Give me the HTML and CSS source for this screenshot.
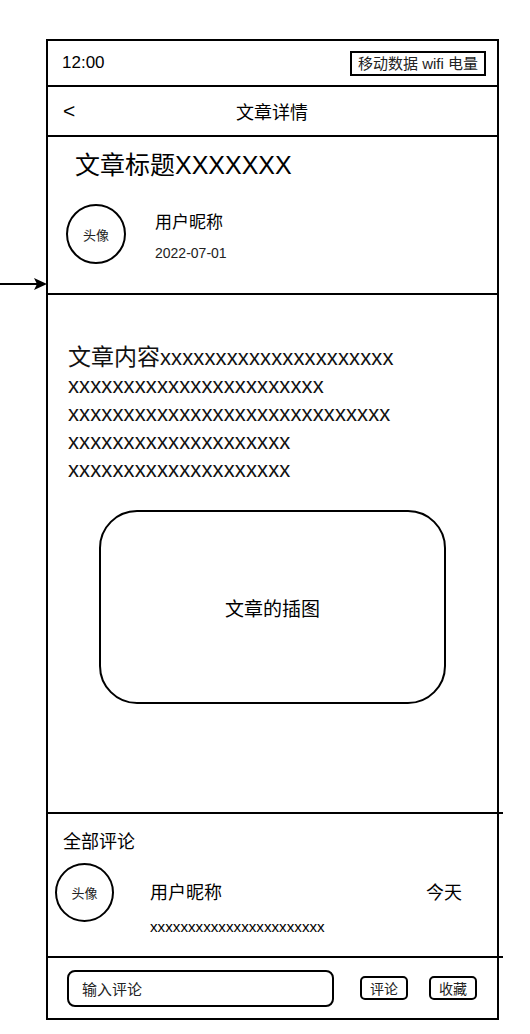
FILE: index.html
```html
<!DOCTYPE html>
<html lang="zh">
<head>
<meta charset="utf-8">
<title>文章详情</title>
<link rel="stylesheet" href="styles.css">
</head>
<body>
<div class="canvas">
  <svg class="arrow" width="48" height="16" viewBox="0 0 48 16" aria-hidden="true">
    <line x1="0" y1="8" x2="38" y2="8" stroke="#000" stroke-width="2"/>
    <polygon points="47,8 34,2 37,8 34,14" fill="#000"/>
  </svg>
  <div class="phone">
    <div class="status">
      <span class="time">12:00</span>
      <span class="badge">移动数据 wifi 电量</span>
    </div>
    <div class="nav">
      <span class="back">&lt;</span>
      <span class="nav-title">文章详情</span>
    </div>
    <div class="head">
      <div class="title">文章标题XXXXXXX</div>
      <div class="author">
        <div class="avatar">头像</div>
        <div class="author-info">
          <div class="name">用户昵称</div>
          <div class="date">2022-07-01</div>
        </div>
      </div>
    </div>
    <div class="content">
      <p class="text"><span class="lead">文章内容</span>xxxxxxxxxxxxxxxxxxxxx<br>xxxxxxxxxxxxxxxxxxxxxxx<br>xxxxxxxxxxxxxxxxxxxxxxxxxxxxx<br>xxxxxxxxxxxxxxxxxxxx<br>xxxxxxxxxxxxxxxxxxxx</p>
      <div class="picture">文章的插图</div>
    </div>
    <div class="rule"></div>
    <div class="comments">
      <div class="comments-title">全部评论</div>
      <div class="comment">
        <div class="avatar small">头像</div>
        <div class="comment-body">
          <div class="comment-top">
            <span class="c-name">用户昵称</span>
            <span class="c-time">今天</span>
          </div>
          <div class="c-text">xxxxxxxxxxxxxxxxxxxxxxx</div>
        </div>
      </div>
    </div>
    <div class="rule"></div>
    <div class="bottom">
      <div class="input">输入评论</div>
      <div class="btn">评论</div>
      <div class="btn">收藏</div>
    </div>
  </div>
</div>
</body>
</html>
```

FILE: styles.css
```css
* { box-sizing: border-box; }
html, body { margin: 0; padding: 0; background: #fff; }
body {
  font-family: "Liberation Sans", "Noto Sans CJK SC", sans-serif;
  color: #000;
}
.canvas {
  position: relative;
  padding: 39px 0 0 46px;
}
.arrow {
  position: absolute;
  left: 0;
  top: 276px;
}
.phone {
  width: 453px;
  height: 981px;
  border: 2px solid #000;
  display: flex;
  flex-direction: column;
}
.status {
  height: 46px;
  border-bottom: 2px solid #000;
  display: flex;
  align-items: center;
  justify-content: space-between;
  padding: 0 11px 0 14px;
}
.time { font-size: 17px; }
.badge {
  font-size: 15px;
  line-height: 19px;
  border: 2px solid #000;
  padding: 1px 6px;
  color: #222;
}
.nav {
  height: 50px;
  border-bottom: 2px solid #000;
  display: grid;
  grid-template-columns: 1fr auto 1fr;
  align-items: center;
  padding: 0 16px 0 15px;
}
.back { font-size: 21px; line-height: 24px; }
.nav-title { font-size: 18px; }
.head {
  height: 158px;
  border-bottom: 2px solid #000;
  padding: 12px 0 0 18px;
}
.title {
  font-size: 25px;
  line-height: 32px;
  padding-left: 9px;
}
.author {
  display: flex;
  margin-top: 23px;
}
.avatar {
  width: 60px;
  height: 60px;
  border: 2px solid #000;
  border-radius: 50%;
  display: flex;
  align-items: center;
  justify-content: center;
  font-size: 13px;
  color: #222;
  flex: none;
}
.author-info { margin-left: 29px; padding-top: 8px; }
.name { font-size: 17px; line-height: 22px; }
.date { font-size: 14px; line-height: 20px; margin-top: 9px; color: #222; }
.content {
  height: 517px;
  padding: 48px 0 0 20px;
}
.text {
  margin: 0;
  font-size: 22px;
  line-height: 28px;
  letter-spacing: 0.12px;
  color: #111;
}
.lead { font-size: 23px; letter-spacing: 0; }
.picture {
  width: 347px;
  height: 194px;
  margin: 26px 0 0 31px;
  border: 2px solid #000;
  border-radius: 38px;
  display: flex;
  align-items: center;
  justify-content: center;
  font-size: 19px;
}
.rule {
  height: 2px;
  background: #000;
  margin-right: -6px;
  flex: none;
}
.comments {
  height: 142px;
  padding: 16px 35px 0 7px;
}
.comments-title {
  font-size: 18px;
  line-height: 24px;
  padding-left: 8px;
}
.comment {
  display: flex;
  margin-top: 9px;
}
.avatar.small { width: 59px; height: 59px; }
.comment-body {
  flex: 1;
  margin-left: 36px;
  padding-top: 18px;
}
.comment-top {
  display: flex;
  justify-content: space-between;
  font-size: 18px;
  line-height: 24px;
}
.c-text {
  font-size: 15.2px;
  line-height: 20px;
  margin-top: 12px;
}
.bottom {
  flex: 1;
  display: flex;
  align-items: center;
  padding: 0 0 0 19px;
}
.input {
  width: 267px;
  height: 37px;
  border: 2px solid #000;
  border-radius: 8px;
  display: flex;
  align-items: center;
  padding-left: 13px;
  font-size: 15px;
  color: #222;
}
.btn {
  width: 48px;
  height: 24px;
  border: 2px solid #000;
  border-radius: 5px;
  display: flex;
  align-items: center;
  justify-content: center;
  font-size: 14px;
  color: #222;
  margin-left: 26px;
}
.btn + .btn { margin-left: 21px; }
```
